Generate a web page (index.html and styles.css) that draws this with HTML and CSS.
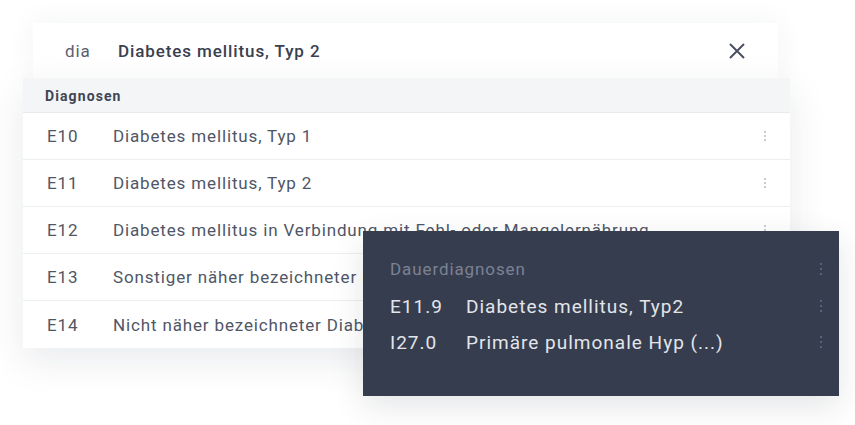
FILE: index.html
```html
<!DOCTYPE html>
<html lang="de">
<head>
    <meta charset="UTF-8">
    <meta name="viewport" content="width=device-width, initial-scale=1.0">
    <title>Diagnosen-Suche</title>
    <link rel="stylesheet" href="styles.css">
</head>
<body>
    <div id="stage">
        <div class="search-bar">
            <span class="query">dia</span>
            <span class="selection">Diabetes mellitus, Typ 2</span>
            <button class="clear" aria-label="Leeren">
                <svg width="18" height="18" viewBox="0 0 18 18"><path d="M2 2L16 16M16 2L2 16" stroke="#4a5062" stroke-width="2" fill="none"/></svg>
            </button>
        </div>

        <div class="results">
            <div class="results-head">Diagnosen</div>
            <div class="result"><span class="code">E10</span><span class="label">Diabetes mellitus, Typ 1</span><span class="kebab"></span></div>
            <div class="result"><span class="code">E11</span><span class="label">Diabetes mellitus, Typ 2</span><span class="kebab"></span></div>
            <div class="result"><span class="code">E12</span><span class="label">Diabetes mellitus in Verbindung mit Fehl- oder Mangelernährung</span><span class="kebab"></span></div>
            <div class="result"><span class="code">E13</span><span class="label">Sonstiger näher bezeichneter Diabetes mellitus</span><span class="kebab"></span></div>
            <div class="result"><span class="code">E14</span><span class="label">Nicht näher bezeichneter Diabetes mellitus</span><span class="kebab"></span></div>
        </div>

        <div class="permanent">
            <div class="permanent-head"><span>Dauerdiagnosen</span><span class="kebab dark"></span></div>
            <div class="permanent-row"><span class="code">E11.9</span><span class="label">Diabetes mellitus, Typ2</span><span class="kebab dark"></span></div>
            <div class="permanent-row"><span class="code">I27.0</span><span class="label">Primäre pulmonale Hyp (...)</span><span class="kebab dark"></span></div>
        </div>
    </div>
</body>
</html>
```

FILE: styles.css
```css
body {
    margin: 0;
    background-color: #fff;
    font-family: Roboto, "Liberation Sans", sans-serif;
    color: #505666;
}

#stage {
    position: relative;
    width: 855px;
    height: 425px;
    padding-top: 23px;
    box-sizing: border-box;
    overflow: hidden;
}

.search-bar {
    display: flex;
    align-items: center;
    margin-left: 33px;
    width: 745px;
    height: 55px;
    padding: 0 24px 0 32px;
    box-sizing: border-box;
    background-color: #fff;
    box-shadow: 0 0 30px rgba(40, 50, 70, 0.06);
    font-size: 17px;
    letter-spacing: 0.9px;
}

.query {
    color: #5a6070;
    width: 53px;
}

.selection {
    flex: 1;
    font-weight: 500;
    color: #3a404f;
}

.clear {
    border: none;
    background: none;
    padding: 0;
    display: flex;
    margin-right: 8px;
}

.results {
    position: relative;
    margin-left: 23px;
    width: 767px;
    background-color: #fff;
    box-shadow: 0 12px 36px rgba(40, 50, 70, 0.10);
}

.results-head {
    height: 35px;
    line-height: 36px;
    padding-left: 22px;
    background-color: #f4f5f7;
    border-bottom: 1px solid #e7e9ed;
    box-sizing: border-box;
    font-size: 14px;
    font-weight: 700;
    letter-spacing: 1.1px;
    color: #3f4554;
}

.result {
    display: flex;
    align-items: center;
    height: 47px;
    padding: 0 24px 0 24px;
    border-bottom: 1px solid #eceef1;
    box-sizing: border-box;
    font-size: 17px;
    letter-spacing: 0.85px;
}

.result:last-child {
    border-bottom: none;
}

.result .code {
    width: 66px;
    flex: none;
}

.result .label {
    flex: 1;
    white-space: nowrap;
    overflow: hidden;
}

.kebab {
    width: 2px;
    height: 2px;
    margin: 0 0 0 10px;
    background-color: #c9ccd3;
    box-shadow: 0 -4px 0 #c9ccd3, 0 4px 0 #c9ccd3;
    flex: none;
}

.kebab.dark {
    background-color: #59617a;
    box-shadow: 0 -5px 0 #59617a, 0 5px 0 #59617a;
}

.permanent {
    position: absolute;
    left: 363px;
    top: 231px;
    width: 476px;
    height: 165px;
    padding: 26px 17px 0 27px;
    box-sizing: border-box;
    background-color: #363d4f;
    box-shadow: 0 10px 30px rgba(30, 40, 60, 0.12);
}

.permanent-head {
    display: flex;
    justify-content: space-between;
    align-items: center;
    height: 24px;
    margin-bottom: 7px;
    font-size: 17px;
    letter-spacing: 0.9px;
    color: #7b8293;
}

.permanent-row {
    display: flex;
    align-items: center;
    height: 36px;
    font-size: 19px;
    letter-spacing: 1px;
    color: #e3e5ea;
}

.permanent-row .code {
    width: 76px;
    flex: none;
}

.permanent-row .label {
    flex: 1;
}
```
